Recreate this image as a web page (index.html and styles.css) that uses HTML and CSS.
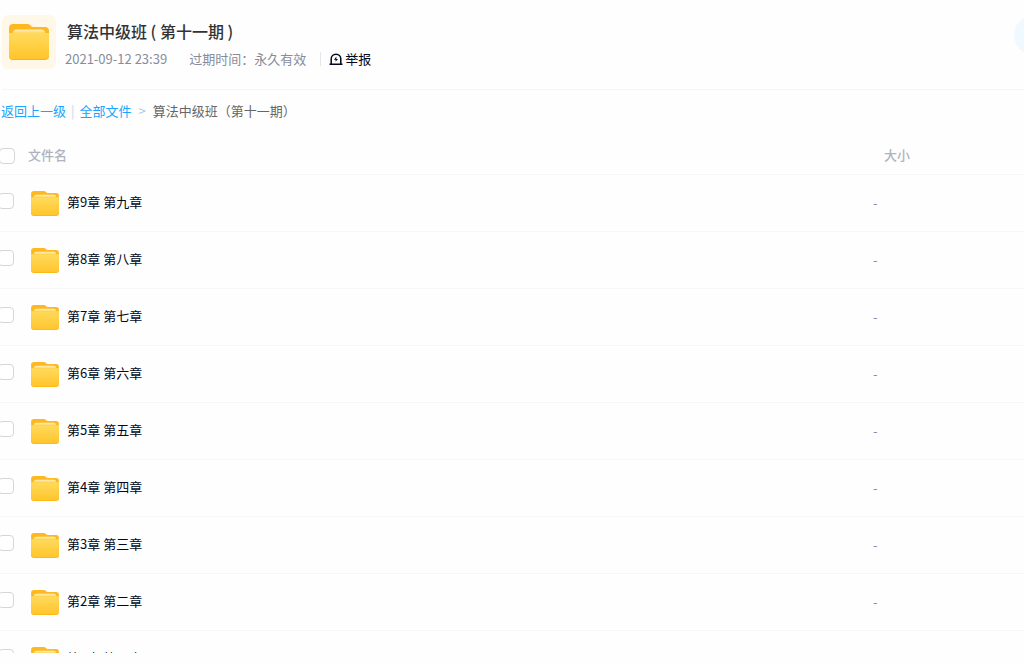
FILE: index.html
```html
<!DOCTYPE html>
<html lang="zh-CN">
<head>
    <meta charset="UTF-8">
    <meta name="viewport" content="width=device-width, initial-scale=1.0">
    <title>算法中级班（第十一期）</title>
    <link rel="stylesheet" href="styles.css">
</head>
<body>
    <svg class="defs" aria-hidden="true">
        <defs>
            <linearGradient id="folder-back" x1="0" y1="0" x2="0" y2="1">
                <stop offset="0" stop-color="#ffb821"/>
                <stop offset="1" stop-color="#fdb50f"/>
            </linearGradient>
            <linearGradient id="folder-front" x1="0" y1="0" x2="0" y2="1">
                <stop offset="0" stop-color="#ffda5c"/>
                <stop offset="1" stop-color="#ffc52b"/>
            </linearGradient>
            <linearGradient id="folder-paper" x1="0" y1="0" x2="0" y2="1">
                <stop offset="0" stop-color="#ffeec2"/>
                <stop offset="1" stop-color="#ffda5c"/>
            </linearGradient>
            <symbol id="folder" viewBox="0 0 40 36">
                <path fill="url(#folder-back)" d="M4 0h14.500q1.500 0 2.500 1l1.200 1.200q.8.800 2.300.8H36a4 4 0 0 1 4 4v25a4 4 0 0 1-4 4H4a4 4 0 0 1-4-4V4a4 4 0 0 1 4-4z"/>
                <path fill="url(#folder-front)" d="M0 9h40v22a4 4 0 0 1-4 4H4a4 4 0 0 1-4-4z"/>
                <path fill="url(#folder-paper)" d="M4 9q0-3.500 3.500-3.500h25Q36 5.500 36 9z"/>
            </symbol>
        </defs>
    </svg>

    <div class="page">
        <header class="share-header">
            <div class="cover"><svg class="cover-icon"><use href="#folder"/></svg></div>
            <div class="share-info">
                <h1>算法中级班 ( 第十一期 )</h1>
                <div class="meta">
                    <span>2021-09-12 23:39</span>
                    <span class="expire">过期时间：永久有效</span>
                    <button class="report" type="button">
                        <svg class="report-icon" viewBox="0 0 14 13">
                            <path fill="none" stroke="currentColor" stroke-width="1.500" d="M2.200 11V6a4.800 4.800 0 0 1 9.600 0v5M.5 11.200h13"/>
                            <path fill="currentColor" d="M7.400 3.600L5 6.700h1.700L6.500 8.800 9 5.900H7.300z"/>
                        </svg>举报
                    </button>
                </div>
            </div>
            <button class="save" type="button" aria-label="保存"></button>
        </header>

        <nav class="breadcrumb">
            <a href="#">返回上一级</a>
            <span class="bar">|</span>
            <a href="#">全部文件</a>
            <span class="arrow">&gt;</span>
            <span>算法中级班（第十一期）</span>
        </nav>

        <div class="file-list">
            <table>
                <thead>
                    <tr>
                        <th class="check"><input type="checkbox" aria-label="全选"></th>
                        <th class="name">文件名</th>
                        <th class="size">大小</th>
                    </tr>
                </thead>
                <tbody>
                    <tr>
                        <td class="check"><input type="checkbox" id="f9"></td>
                        <td><label class="file" for="f9"><svg class="file-icon"><use href="#folder"/></svg><span>第9章 第九章</span></label></td>
                        <td class="size">-</td>
                    </tr>
                    <tr>
                        <td class="check"><input type="checkbox" id="f8"></td>
                        <td><label class="file" for="f8"><svg class="file-icon"><use href="#folder"/></svg><span>第8章 第八章</span></label></td>
                        <td class="size">-</td>
                    </tr>
                    <tr>
                        <td class="check"><input type="checkbox" id="f7"></td>
                        <td><label class="file" for="f7"><svg class="file-icon"><use href="#folder"/></svg><span>第7章 第七章</span></label></td>
                        <td class="size">-</td>
                    </tr>
                    <tr>
                        <td class="check"><input type="checkbox" id="f6"></td>
                        <td><label class="file" for="f6"><svg class="file-icon"><use href="#folder"/></svg><span>第6章 第六章</span></label></td>
                        <td class="size">-</td>
                    </tr>
                    <tr>
                        <td class="check"><input type="checkbox" id="f5"></td>
                        <td><label class="file" for="f5"><svg class="file-icon"><use href="#folder"/></svg><span>第5章 第五章</span></label></td>
                        <td class="size">-</td>
                    </tr>
                    <tr>
                        <td class="check"><input type="checkbox" id="f4"></td>
                        <td><label class="file" for="f4"><svg class="file-icon"><use href="#folder"/></svg><span>第4章 第四章</span></label></td>
                        <td class="size">-</td>
                    </tr>
                    <tr>
                        <td class="check"><input type="checkbox" id="f3"></td>
                        <td><label class="file" for="f3"><svg class="file-icon"><use href="#folder"/></svg><span>第3章 第三章</span></label></td>
                        <td class="size">-</td>
                    </tr>
                    <tr>
                        <td class="check"><input type="checkbox" id="f2"></td>
                        <td><label class="file" for="f2"><svg class="file-icon"><use href="#folder"/></svg><span>第2章 第二章</span></label></td>
                        <td class="size">-</td>
                    </tr>
                    <tr>
                        <td class="check"><input type="checkbox" id="f1"></td>
                        <td><label class="file" for="f1"><svg class="file-icon"><use href="#folder"/></svg><span>第1章 第一章</span></label></td>
                        <td class="size"></td>
                    </tr>
                </tbody>
            </table>
        </div>
    </div>
</body>
</html>
```
FILE: styles.css
```css
* {
    box-sizing: border-box;
}
body {
    margin: 0;
    background: #fefefe;
    color: #03081a;
    font-family: "Noto Sans CJK SC", sans-serif;
    font-size: 13px;
    line-height: 20px;
}
button {
    border: none;
    background: none;
    padding: 0;
    font: inherit;
    color: inherit;
    cursor: pointer;
}
.defs {
    position: absolute;
    width: 0;
    height: 0;
}
.page {
    display: flex;
    flex-direction: column;
    height: 100vh;
    padding-bottom: 11px;
    overflow: hidden;
}
.share-header {
    display: flex;
    align-items: flex-start;
    gap: 9px;
    margin-left: 2px;
    padding: 15px 0 20px;
    border-bottom: 1px solid #f5f5f6;
}
.cover {
    display: flex;
    align-items: center;
    justify-content: center;
    width: 54px;
    height: 54px;
    border-radius: 6px;
    background: #fff8e9;
}
.cover-icon {
    width: 40px;
    height: 36px;
}
.share-info {
    flex: 1;
    padding-top: 4px;
}
h1 {
    margin: 0 0 6px 2px;
    font-size: 16px;
    font-weight: 500;
    line-height: 24px;
    word-spacing: normal;
    color: #333;
}
.meta {
    display: flex;
    align-items: center;
    color: #878c9c;
}
.expire {
    margin-left: 22px;
}
.report {
    display: flex;
    align-items: center;
    gap: 2px;
    margin-left: 14px;
    color: #03081a;
}
.report::before {
    content: "";
    width: 1px;
    height: 14px;
    margin-right: 6px;
    background: #e6e7ea;
}
.report-icon {
    width: 14px;
    height: 13px;
}
.save {
    width: 40px;
    height: 40px;
    margin-right: -30px;
    border-radius: 20px;
    background: #f0f9ff;
}
.breadcrumb {
    display: flex;
    gap: 5px;
    padding: 11px 0 14px 1px;
    color: #666;
}
.breadcrumb a {
    color: #19a4ff;
    text-decoration: none;
}
.bar {
    color: #c4d8f0;
}
.arrow {
    margin: 0 2px;
    color: #a9c8ee;
}
.file-list {
    flex: 1;
    overflow: hidden;
}
table {
    width: 100%;
    border-collapse: separate;
    border-spacing: 0;
    table-layout: fixed;
}
th, td {
    height: 57px;
    padding: 0;
    text-align: left;
    border-bottom: 1px solid #f7f7fa;
}
th {
    height: 40px;
    color: #afb3bf;
    font-weight: 500;
}
.check {
    width: 28px;
}
.size {
    width: 151px;
    color: #878c9c;
}
th.size {
    padding-left: 11px;
    color: #afb3bf;
}
input[type="checkbox"] {
    appearance: none;
    display: block;
    width: 16px;
    height: 16px;
    margin: 0 0 4px -2px;
    border: 1px solid #d6d6d9;
    border-radius: 4px;
    background: #fff;
}
th input[type="checkbox"] {
    margin: 2px 0 0 -1px;
}
.file {
    display: flex;
    align-items: center;
    gap: 8px;
    padding-left: 3px;
}
.file span {
    padding-bottom: 2px;
}
.file-icon {
    width: 28px;
    height: 25px;
}
```
